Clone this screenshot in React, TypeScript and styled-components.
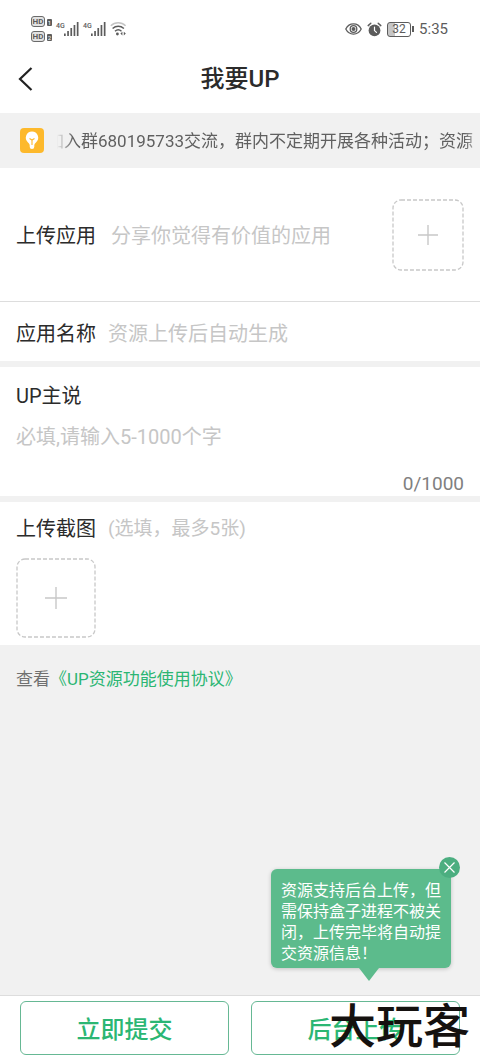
import React from "react";
import styled, { createGlobalStyle } from "styled-components";

const GlobalStyle = createGlobalStyle`
  * { box-sizing: border-box; }
  body { margin: 0; background: #f1f1f1; }
  body, button, input, textarea {
    font-family: Roboto, "Noto Sans CJK SC", sans-serif;
  }
`;

const Page = styled.div`
  display: flex;
  flex-direction: column;
  min-height: 100vh;
  overflow-x: hidden;
  background: #f1f1f1;
  color: #2b2b2b;
`;

const StatusBar = styled.div`
  display: flex;
  align-items: center;
  justify-content: space-between;
  height: 44px;
  padding: 14px 32px 0 31px;
  background: #fff;
  color: #5c5c5c;
`;

const StatusGroup = styled.div<{ $gap: number }>`
  display: flex;
  align-items: center;
  gap: ${(p) => p.$gap}px;
`;

const HdStack = styled.div`
  display: flex;
  flex-direction: column;
  gap: 4px;
`;

const HdRow = styled.div`
  display: flex;
  align-items: center;
  gap: 2px;
`;

const HdTag = styled.span`
  width: 14px;
  height: 11px;
  border: 1px solid #6a6a6a;
  border-radius: 3px;
  background: #e2e2e2;
  font-size: 8px;
  font-weight: 700;
  line-height: 9px;
  text-align: center;
`;

const SimTag = styled.span`
  width: 5px;
  height: 7px;
  margin-top: 2px;
  border-radius: 1px;
  background: #5c5c5c;
  color: #fff;
  font-size: 6px;
  line-height: 7px;
  text-align: center;
`;

const Signal = styled.div`
  display: flex;
  align-items: flex-start;
`;

const NetworkType = styled.span`
  width: 8px;
  font-size: 7px;
  font-weight: 500;
  line-height: 8px;
  white-space: nowrap;
`;

const Battery = styled.div`
  display: flex;
  align-items: center;
  gap: 1px;

  &::after {
    content: "";
    width: 2px;
    height: 6px;
    background: #5c5c5c;
  }
`;

const BatteryBody = styled.span`
  width: 24px;
  height: 15px;
  border: 1px solid #5c5c5c;
  border-radius: 3px;
  background: linear-gradient(to right, #c6c6c6 32%, #fff 32%);
  font-size: 12px;
  line-height: 13px;
  text-align: center;
`;

const Clock = styled.span`
  font-size: 15px;
  line-height: 18px;
`;

const Header = styled.header`
  display: grid;
  grid-template-columns: 48px 1fr 48px;
  align-items: center;
  height: 69px;
  background: #fff;
`;

const BackButton = styled.button`
  display: flex;
  padding: 0 0 0 16px;
  border: 0;
  background: none;
  color: #222;
`;

const Title = styled.h1`
  margin: 0;
  padding-top: 1px;
  font-size: 24px;
  font-weight: 500;
  line-height: 32px;
  text-align: center;
`;

const Notice = styled.div`
  display: flex;
  align-items: center;
  gap: 13px;
  height: 55px;
  padding-left: 20px;
`;

const Marquee = styled.div`
  flex: 1;
  min-width: 0;
  display: flex;
  overflow: hidden;
  mask-image: linear-gradient(to right, transparent, #000 16px, #000 calc(100% - 16px), transparent calc(100% + 4px));
`;

const MarqueeText = styled.span`
  margin-left: -10px;
  white-space: nowrap;
  font-size: 17px;
  line-height: 24px;
  color: #606060;
`;

const Section = styled.section`
  background: #fff;
`;

const UploadRow = styled(Section)`
  display: flex;
  align-items: center;
  justify-content: space-between;
  height: 134px;
  padding: 0 16px;
  border-bottom: 1px solid #ddd;
`;

const Label = styled.label`
  flex: none;
  font-size: 20px;
  line-height: 28px;
`;

const Hint = styled.span<{ $size?: number }>`
  font-size: ${(p) => p.$size ?? 20}px;
  line-height: 28px;
  color: #c6c6c6;
`;

const LabelLine = styled.div<{ $gap: number }>`
  display: flex;
  align-items: center;
  gap: ${(p) => p.$gap}px;
  padding-top: 2px;
`;

const AddButton = styled.button<{ $size: number }>`
  display: flex;
  flex: none;
  align-items: center;
  justify-content: center;
  width: ${(p) => p.$size}px;
  height: ${(p) => p.$size}px;
  padding: 0;
  border: 0;
  background: none;
  color: #c8c8c8;
`;

const NameRow = styled(Section)`
  display: flex;
  align-items: center;
  gap: 12px;
  height: 59px;
  padding: 4px 16px 0;
`;

const TextInput = styled.input`
  flex: 1;
  min-width: 0;
  padding: 0;
  border: 0;
  outline: 0;
  background: none;
  font-size: 20px;
  line-height: 28px;
  &::placeholder { color: #c6c6c6; opacity: 1; }
`;

const CommentSection = styled(Section)`
  display: flex;
  flex-direction: column;
  margin-top: 6px;
  padding: 15px 16px 3px;
`;

const TextArea = styled.textarea`
  display: block;
  height: 52px;
  margin-top: 13px;
  padding: 0;
  border: 0;
  outline: 0;
  resize: none;
  background: none;
  font-size: 20px;
  line-height: 28px;
  &::placeholder { color: #c6c6c6; opacity: 1; }
`;

const Counter = styled.span`
  align-self: flex-end;
  font-size: 19px;
  line-height: 18px;
  color: #808080;
`;

const ShotSection = styled(Section)`
  margin-top: 6px;
  padding: 11px 16px 7px;
`;

const ShotGrid = styled.div`
  display: flex;
  margin-top: 15px;
`;

const Agreement = styled.p`
  margin: 0;
  padding: 22px 16px;
  font-size: 17px;
  line-height: 24px;
  color: #707070;
`;

const AgreementLink = styled.a`
  color: #2bb673;
  text-decoration: none;
`;

const Footer = styled.footer`
  position: relative;
  display: grid;
  grid-template-columns: 1fr 1fr;
  gap: 22px;
  margin-top: auto;
  padding: 5px 20px 6px;
  border-top: 1px solid #ddd;
  background: #fff;
`;

const ActionButton = styled.button`
  height: 54px;
  padding: 4px 0 0;
  border: 1px solid #66b894;
  border-radius: 6px;
  background: #fff;
  color: #2bb673;
  font-size: 24px;
  font-weight: 500;
  line-height: 32px;
`;

const Tooltip = styled.div`
  position: absolute;
  right: 29px;
  bottom: 93px;
  width: 180px;
  padding: 11px 10px 4px;
  border-radius: 6px;
  background: #5cbb8c;
  box-shadow: 0 1px 4px rgba(0, 0, 0, 0.2);
  color: #fff;
  font-size: 16px;
  line-height: 21px;

  &::after {
    content: "";
    position: absolute;
    top: 100%;
    left: 50%;
    margin-left: -2px;
    border: solid transparent;
    border-width: 13px 10px 0;
    border-top-color: #5cbb8c;
  }
`;

const CloseButton = styled.button`
  position: absolute;
  top: -12px;
  right: -9px;
  display: flex;
  align-items: center;
  justify-content: center;
  width: 21px;
  height: 21px;
  padding: 0;
  border: 0;
  border-radius: 50%;
  background: #4cae80;
  color: #fff;
`;

const Watermark = styled.span`
  position: absolute;
  right: 10px;
  bottom: 8px;
  color: #15110f;
  font-size: 47px;
  font-weight: 500;
  line-height: 52px;
  pointer-events: none;
`;

function SignalIcon() {
  return (
    <svg width="15" height="14" viewBox="0 0 15 14" fill="currentColor" aria-hidden="true">
      <rect x="0" y="11.500" width="1.7" height="2.5" />
      <rect x="3.200" y="9" width="1.7" height="5" />
      <rect x="6.400" y="6" width="1.7" height="8" />
      <rect x="9.600" y="3" width="1.7" height="11" />
      <rect x="12.800" y="0" width="1.7" height="14" />
    </svg>
  );
}

function WifiIcon() {
  return (
    <svg width="17" height="14" viewBox="0 0 17 14" fill="none" stroke="currentColor" strokeWidth="1.5" aria-hidden="true">
      <path d="M.8 3.800C5-.2 11.400-.2 15.600 3.800" stroke="#c4c4c4" />
      <path d="M2.600 6.500c3.300-3 8-3 11.300 0" />
      <path d="M5 9.200c1.900-1.600 4.600-1.600 6.500 0" />
      <circle cx="7.400" cy="12" r="1.400" fill="currentColor" stroke="none" />
      <path d="M12.400 9.800 10.400 11.600l2 1.800zM13.800 9.800l2 1.800-2 1.800z" fill="currentColor" stroke="none" />
    </svg>
  );
}

function EyeIcon() {
  return (
    <svg width="17" height="14" viewBox="0 0 17 14" fill="none" stroke="currentColor" strokeWidth="1.3" aria-hidden="true">
      <path d="M.8 7C4.200.2 12.800.2 16.200 7 12.800 13.800 4.200 13.800.8 7z" />
      <circle cx="8.500" cy="7" r="3.300" />
      <circle cx="8.500" cy="7" r="2" fill="currentColor" stroke="none" />
    </svg>
  );
}

function AlarmIcon() {
  return (
    <svg width="15" height="15" viewBox="0 0 15 15" fill="none" stroke="currentColor" strokeLinecap="round" aria-hidden="true">
      <circle cx="7.500" cy="8.400" r="5.900" fill="currentColor" stroke="none" />
      <path d="M1.200 3.600 3.800 1.300M13.800 3.600 11.200 1.300" strokeWidth="1.500" />
      <path d="M7.500 5.200v3.400l2 1.800" stroke="#fff" strokeWidth="1.200" />
    </svg>
  );
}

function BulbIcon() {
  return (
    <svg width="24" height="25" viewBox="0 0 24 25" aria-hidden="true">
      <rect width="24" height="25" rx="4" fill="#fdb92c" />
      <path d="M12 3.500a6.200 6.200 0 0 0-4 10.900c1.200 1 1.700 2 1.700 3.200v1.200a2.300 2.300 0 0 0 4.600 0v-1.200c0-1.200.5-2.200 1.700-3.200A6.200 6.200 0 0 0 12 3.500z" fill="#fff" />
      <path d="M9.500 10.500 12 12l2.500-1.500M12 12v5" stroke="#fdb92c" strokeWidth="1.100" fill="none" />
    </svg>
  );
}

function DashedPlus({ size, arm }: { size: number; arm: number }) {
  const mid = size / 2;
  return (
    <svg width={size} height={size} fill="none" stroke="currentColor" aria-hidden="true">
      <rect x="1" y="1" width={size - 2} height={size - 2} rx="8" strokeWidth="1.300" strokeDasharray="4 2" />
      <path d={`M${mid - arm} ${mid}H${mid + arm}M${mid} ${mid - arm}V${mid + arm}`} strokeWidth="1.400" />
    </svg>
  );
}

function HdBadge({ sim }: { sim: number }) {
  return (
    <HdRow>
      <HdTag>HD</HdTag>
      <SimTag>{sim}</SimTag>
    </HdRow>
  );
}

export default function App() {
  return (
    <Page>
      <GlobalStyle />
      <StatusBar>
        <StatusGroup $gap={4}>
          <HdStack>
            <HdBadge sim={1} />
            <HdBadge sim={2} />
          </HdStack>
          <Signal><NetworkType>4G</NetworkType><SignalIcon /></Signal>
          <Signal><NetworkType>4G</NetworkType><SignalIcon /></Signal>
          <WifiIcon />
        </StatusGroup>
        <StatusGroup $gap={5}>
          <EyeIcon />
          <AlarmIcon />
          <Battery><BatteryBody>32</BatteryBody></Battery>
          <Clock>5:35</Clock>
        </StatusGroup>
      </StatusBar>
      <Header>
        <BackButton type="button" aria-label="返回">
          <svg width="18" height="26" viewBox="0 0 18 26" fill="none" stroke="currentColor" strokeWidth="2.200" aria-hidden="true">
            <path d="M15.500 2 4 13l11.500 11" />
          </svg>
        </BackButton>
        <Title>我要UP</Title>
      </Header>
      <Notice>
        <BulbIcon />
        <Marquee>
          <MarqueeText>加入群680195733交流，群内不定期开展各种活动；资源</MarqueeText>
        </Marquee>
      </Notice>
      <UploadRow>
        <LabelLine $gap={15}>
          <Label htmlFor="app-file">上传应用</Label>
          <Hint>分享你觉得有价值的应用</Hint>
        </LabelLine>
        <AddButton id="app-file" type="button" $size={72}>
          <DashedPlus size={72} arm={10} />
        </AddButton>
      </UploadRow>
      <NameRow>
        <Label htmlFor="app-name">应用名称</Label>
        <TextInput id="app-name" placeholder="资源上传后自动生成" />
      </NameRow>
      <CommentSection>
        <Label htmlFor="comment">UP主说</Label>
        <TextArea id="comment" maxLength={1000} placeholder="必填,请输入5-1000个字" />
        <Counter>0/1000</Counter>
      </CommentSection>
      <ShotSection>
        <LabelLine $gap={12}>
          <Label htmlFor="shots">上传截图</Label>
          <Hint $size={19}>(选填，最多5张)</Hint>
        </LabelLine>
        <ShotGrid>
          <AddButton id="shots" type="button" $size={80}>
            <DashedPlus size={80} arm={11} />
          </AddButton>
        </ShotGrid>
      </ShotSection>
      <Agreement>
        查看<AgreementLink href="#agreement">《UP资源功能使用协议》</AgreementLink>
      </Agreement>
      <Footer>
        <ActionButton type="button">立即提交</ActionButton>
        <ActionButton type="button">后台上传</ActionButton>
        <Tooltip role="status">
          资源支持后台上传，但需保持盒子进程不被关闭，上传完毕将自动提交资源信息！
          <CloseButton type="button" aria-label="关闭">
            <svg width="13" height="13" viewBox="0 0 13 13" stroke="currentColor" strokeWidth="1.200" aria-hidden="true">
              <path d="M1.500 1.500l10 10M11.500 1.500l-10 10" />
            </svg>
          </CloseButton>
        </Tooltip>
        <Watermark>大玩客</Watermark>
      </Footer>
    </Page>
  );
}
